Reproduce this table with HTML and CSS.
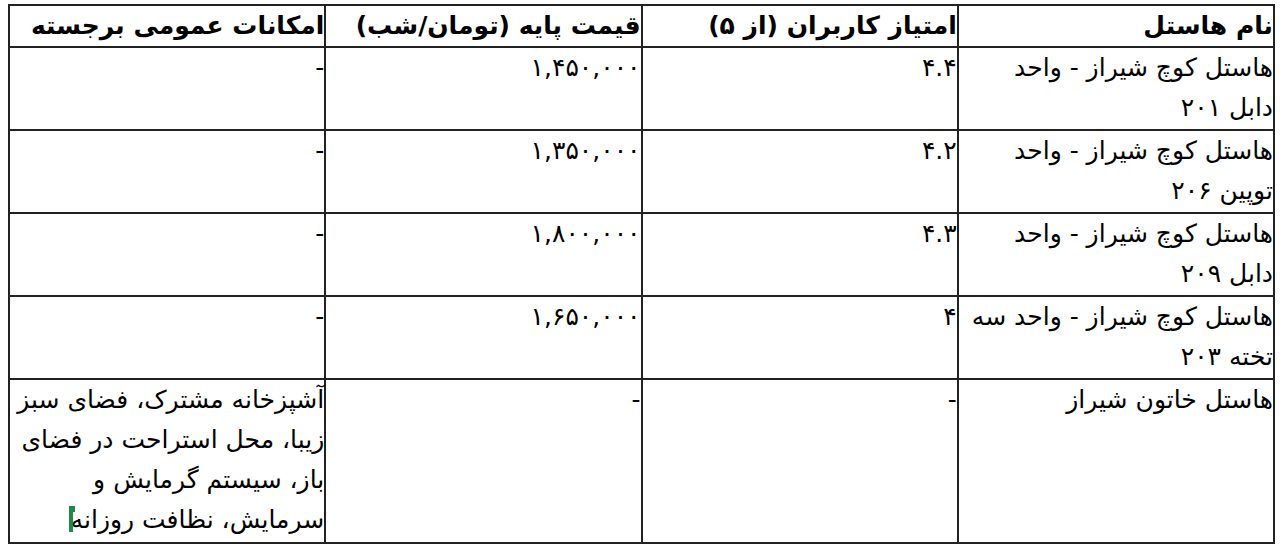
FILE: index.html
```html
<!DOCTYPE html>
<html lang="fa" dir="rtl">
<head>
<meta charset="utf-8">
<link rel="stylesheet" href="styles.css">
</head>
<body>
<table class="grid">
  <colgroup>
    <col class="c1"><col class="c2"><col class="c3"><col class="c4">
  </colgroup>
  <thead>
    <tr class="head">
      <th>نام هاستل</th>
      <th>امتیاز کاربران (از ۵)</th>
      <th>قیمت پایه (تومان/شب)</th>
      <th>امکانات عمومی برجسته</th>
    </tr>
  </thead>
  <tbody>
    <tr class="row">
      <td class="name">هاستل کوچ شیراز - واحد دابل ۲۰۱</td>
      <td>۴.۴</td>
      <td>۱,۴۵۰,۰۰۰</td>
      <td>-</td>
    </tr>
    <tr class="row">
      <td class="name">هاستل کوچ شیراز - واحد توپین ۲۰۶</td>
      <td>۴.۲</td>
      <td>۱,۳۵۰,۰۰۰</td>
      <td>-</td>
    </tr>
    <tr class="row">
      <td class="name">هاستل کوچ شیراز - واحد دابل ۲۰۹</td>
      <td>۴.۳</td>
      <td>۱,۸۰۰,۰۰۰</td>
      <td>-</td>
    </tr>
    <tr class="row">
      <td class="name">هاستل کوچ شیراز - واحد سه تخته ۲۰۳</td>
      <td>۴</td>
      <td>۱,۶۵۰,۰۰۰</td>
      <td>-</td>
    </tr>
    <tr class="row last">
      <td class="name">هاستل خاتون شیراز</td>
      <td>-</td>
      <td>-</td>
      <td>آشپزخانه مشترک، فضای سبز زیبا، محل استراحت در فضای باز، سیستم گرمایش و سرمایش، نظافت روزانه<span class="caret"></span></td>
    </tr>
  </tbody>
</table>
</body>
</html>
```
FILE: styles.css
```css
html, body {
  margin: 0;
  padding: 0;
  background: #ffffff;
}
body {
  padding: 4px 5px 0 8px;
  font-family: "DejaVu Sans", "Noto Sans", sans-serif;
  color: #000000;
}
.grid {
  width: 1267px;
  border-collapse: collapse;
  table-layout: fixed;
  direction: rtl;
}
.grid col { width: 25%; }
.grid th, .grid td {
  border: 2px solid #222222;
  padding: 0;
  text-align: right;
  vertical-align: top;
  font-size: 25px;
  line-height: 40px;
}
.grid th {
  font-weight: bold;
  height: 40px;
  line-height: 40px;
}
.grid td.name { padding-left: 10px; }
.row td { height: 81px; }
.row.last td { height: 162px; }
.caret {
  display: inline-block;
  position: relative;
  width: 4px;
  height: 26px;
  margin-right: -2px;
  vertical-align: -4px;
  background: #1f8a4c;
}
.caret::after {
  content: "";
  position: absolute;
  left: 3px;
  top: 0;
  width: 3px;
  height: 6px;
  background: #1f8a4c;
}
```
